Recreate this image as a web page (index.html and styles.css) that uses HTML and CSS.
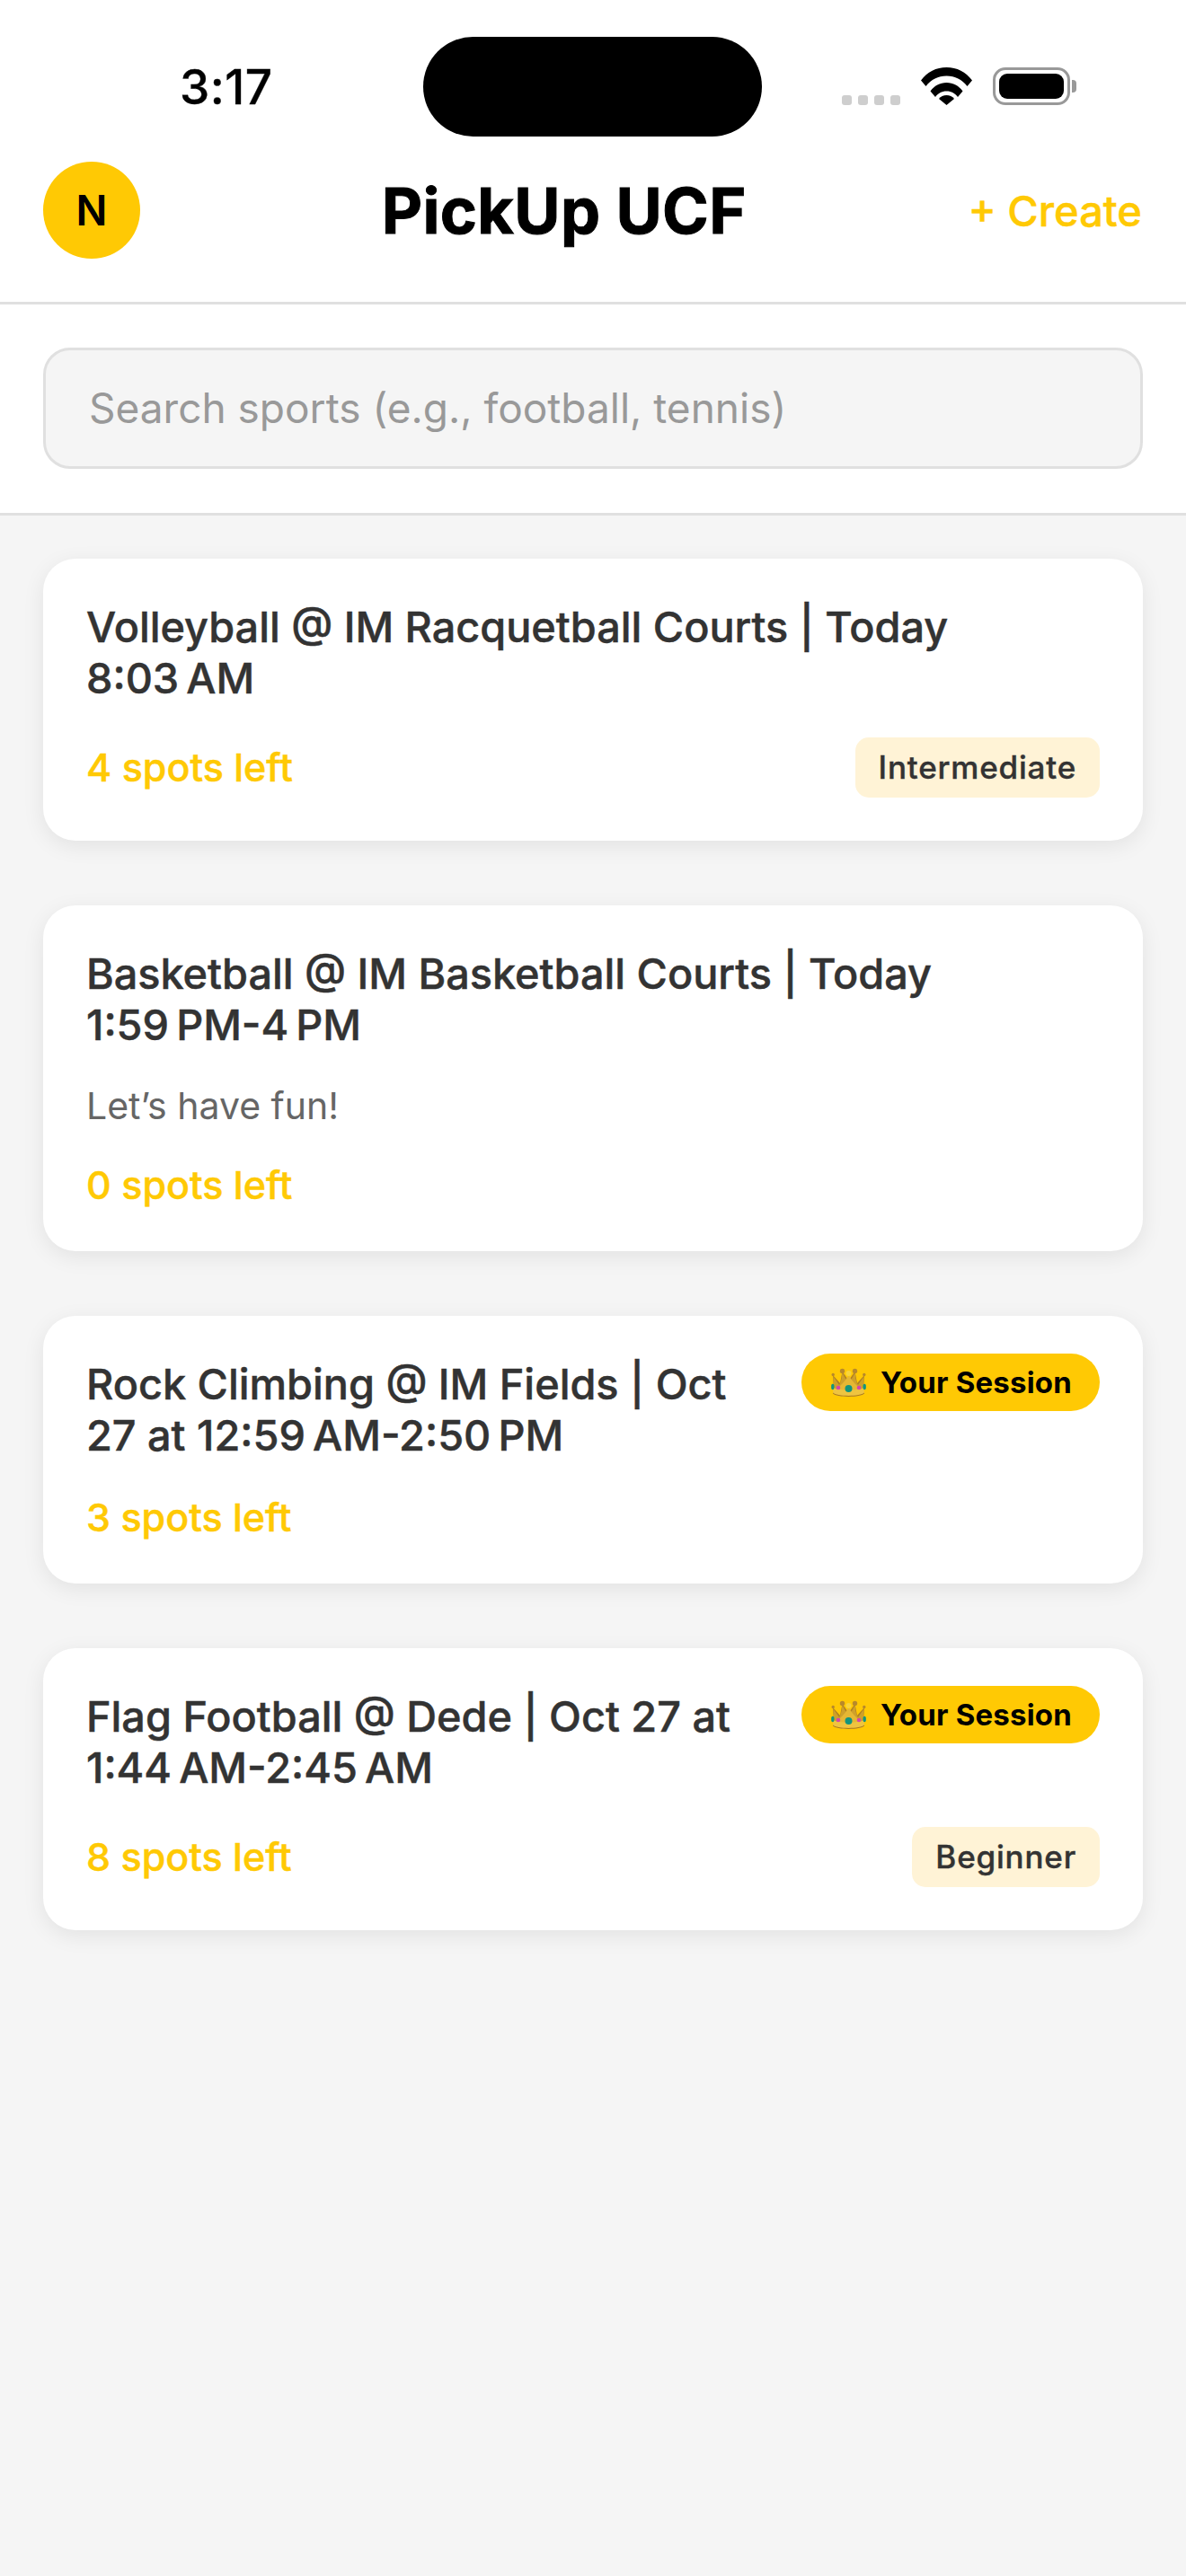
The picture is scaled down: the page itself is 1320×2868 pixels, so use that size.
FILE: index.html
```html
<!DOCTYPE html>
<html lang="en">

<head>
  <meta charset="UTF-8">
  <title>PickUp UCF</title>
  <meta name="viewport" content="width=device-width, initial-scale=1.0">
  <link rel="stylesheet" href="styles.css">
</head>

<body>
  <svg class="defs" width="0" height="0" aria-hidden="true">
    <symbol id="crown" viewBox="0 0 39 32">
      <!-- back of the crown -->
      <path d="M3 24 2 8l8 9L12.500 4l7 10 7-10L29 17l8-9-1 16z" fill="#b08020"/>
      <!-- front lobes -->
      <path d="M3 25 2.500 9.500 9 19c2-2.500 3-8 3.500-14 2 5 4.500 9 7 11 2.500-2 5-6 7-11 .5 6 1.500 11.500 3.500 14l6.500-9.500L36 25z" fill="#dcae30" opacity=".7"/>
      <path d="M19.500 8c-3 5-5.500 8.500-9.500 12l-5 5h29l-5-5c-4-3.500-6.500-7-9.500-12z" fill="#e6b733"/>
      <!-- band -->
      <path d="M2.500 22c5 3.500 29 3.500 34 0l.5 6.500c-4 4.500-31 4.500-35 0z" fill="#efc440"/>
      <path d="M2 27.500c4 4.500 31 4.500 35 0v1c-4 4.500-31 4.500-35 0z" fill="#a9781c"/>
      <circle cx="12.500" cy="3.500" r="2.700" fill="#b8892a"/>
      <circle cx="26.500" cy="3.500" r="2.700" fill="#b8892a"/>
      <circle cx="19.500" cy="6" r="3" fill="#f7d43e"/>
      <circle cx="2.200" cy="7.500" r="1.700" fill="#b8892a"/>
      <circle cx="36.800" cy="7.500" r="1.700" fill="#b8892a"/>
      <circle cx="19.500" cy="23" r="4" fill="#12947e"/>
      <circle cx="8" cy="22" r="2.300" fill="#d545ad"/>
      <circle cx="31" cy="22" r="2.300" fill="#d545ad"/>
      <ellipse cx="1.800" cy="21" rx="1.700" ry="3.200" fill="#12947e"/>
      <ellipse cx="37.200" cy="21" rx="1.700" ry="3.200" fill="#12947e"/>
    </symbol>
  </svg>

  <header class="top">
    <div class="status">
      <span class="time">3:17</span>
      <i class="island"></i>
      <div class="status-icons">
        <div class="signal"><i></i><i></i><i></i><i></i></div>
        <svg class="wifi" width="57" height="42" viewBox="0 0 57 42">
          <path d="M0 14.500C7 5 17 0 28.500 0S50 5 57 14.500l-5.500 6.500C45.500 13.500 38 9.500 28.500 9.500S11.500 13.500 5.500 21z"/>
          <path d="M10.500 26.500C15 20.500 21 17 28.500 17s13.500 3.500 18 9.500l-5.500 6.500C38 29 34 26.500 28.500 26.500S19 29 16 33z"/>
          <path d="M20 35c2-2.500 5-4 8.500-4s6.500 1.500 8.500 4l-8.500 7z"/>
        </svg>
        <div class="battery"><i></i></div>
        <i class="battery-cap"></i>
      </div>
    </div>
    <nav class="nav">
      <div class="avatar">N</div>
      <h1>PickUp UCF</h1>
      <a class="create">+ Create</a>
    </nav>
  </header>

  <section class="search">
    <div class="search-box">Search sports (e.g., football, tennis)</div>
  </section>

  <main class="list">
    <article class="card">
      <div class="card-head">
        <h2>Volleyball @ IM Racquetball Courts | Today 8:03&#8239;AM</h2>
      </div>
      <div class="card-foot">
        <span class="spots">4 spots left</span>
        <span class="level">Intermediate</span>
      </div>
    </article>

    <article class="card">
      <div class="card-head">
        <h2>Basketball @ IM Basketball Courts | Today 1:59&#8239;PM-4&#8239;PM</h2>
      </div>
      <p class="note">Let’s have fun!</p>
      <div class="card-foot">
        <span class="spots">0 spots left</span>
      </div>
    </article>

    <article class="card">
      <div class="card-head">
        <h2>Rock Climbing @ IM Fields | Oct 27 at 12:59&#8239;AM-2:50&#8239;PM</h2>
        <span class="mine"><svg width="39" height="32"><use href="#crown"/></svg>Your Session</span>
      </div>
      <div class="card-foot">
        <span class="spots">3 spots left</span>
      </div>
    </article>

    <article class="card">
      <div class="card-head">
        <h2>Flag Football @ Dede | Oct 27 at 1:44&#8239;AM-2:45&#8239;AM</h2>
        <span class="mine"><svg width="39" height="32"><use href="#crown"/></svg>Your Session</span>
      </div>
      <div class="card-foot">
        <span class="spots">8 spots left</span>
        <span class="level">Beginner</span>
      </div>
    </article>
  </main>
</body>

</html>
```

FILE: styles.css
```css
:root {
  --yellow: #ffc904;
  --line: #e0e0e0;
  --text: #333333;
  --page: #f5f5f5;
}

* {
  box-sizing: border-box;
}

html, body {
  margin: 0;
  height: 100%;
}

body {
  font-family: Inter, "Noto Sans", sans-serif;
  background-color: var(--page);
  color: var(--text);
}

.defs {
  position: absolute;
}

/* status bar + title */
.top {
  background-color: #fff;
  border-bottom: 3px solid var(--line);
}

.status {
  position: relative;
  display: flex;
  align-items: flex-start;
  height: 180px;
  color: #000;
}

.time {
  margin: 66px 0 0 200px;
  font-size: 53px;
  line-height: 62px;
  font-weight: 500;
  letter-spacing: .5px;
  -webkit-text-stroke: .4px #000;
}

.island {
  position: absolute;
  left: 471px;
  top: 41px;
  width: 377px;
  height: 111px;
  border-radius: 56px;
  background-color: #000;
}

.status-icons {
  display: flex;
  align-items: flex-start;
  margin: 75px 0 0 auto;
  padding-right: 122px;
}

.signal {
  display: flex;
  gap: 7px;
  margin: 31px 23px 0 0;
}
.signal i {
  width: 11px;
  height: 11px;
  border-radius: 3px;
  background-color: #cecece;
}

.wifi {
  display: block;
  margin-right: 23px;
}

.battery {
  width: 86px;
  height: 42px;
  padding: 4px;
  border: 3px solid #999;
  border-radius: 14px;
}
.battery i {
  display: block;
  height: 100%;
  border-radius: 9px;
  background-color: #000;
}
.battery-cap {
  width: 5px;
  height: 14px;
  margin: 14px 0 0 2px;
  border-radius: 0 4px 4px 0;
  background-color: #999;
}

.nav {
  display: flex;
  align-items: center;
  justify-content: space-between;
  height: 156px;
  padding: 0 48px 48px;
}

.avatar {
  display: flex;
  align-items: center;
  justify-content: center;
  width: 108px;
  height: 108px;
  border-radius: 50%;
  background-color: var(--yellow);
  color: #000;
  font-size: 46px;
  font-weight: 600;
}

.nav h1 {
  margin: 0 0 0 22px;
  color: #000;
  font-size: 70px;
  font-weight: 700;
  letter-spacing: .4px;
  -webkit-text-stroke: 1px #000;
}

.create {
  margin-right: 1px;
  color: var(--yellow);
  font-size: 47px;
  font-weight: 500;
  -webkit-text-stroke: .5px var(--yellow);
}

/* search */
.search {
  padding: 48px 48px 49px;
  background-color: #fff;
  border-bottom: 3px solid var(--line);
}

.search-box {
  height: 135px;
  padding: 0 48px;
  line-height: 129px;
  background-color: var(--page);
  border: 3px solid var(--line);
  border-radius: 30px;
  color: #999;
  font-size: 46px;
}

/* sessions */
.list {
  display: flex;
  flex-direction: column;
  gap: 72px;
  padding: 48px;
}

.card {
  padding: 48px;
  background-color: #fff;
  border-radius: 36px;
  box-shadow: 0 6px 24px rgba(0, 0, 0, .08);
}

.card-head {
  display: flex;
  align-items: flex-start;
  justify-content: space-between;
  gap: 48px;
}

.card h2 {
  flex: 1;
  margin: 0;
  font-size: 46.8px;
  line-height: 57px;
  font-weight: 500;
  -webkit-text-stroke: .5px var(--text);
}

.mine {
  display: flex;
  flex: none;
  align-items: center;
  gap: 16px;
  height: 64px;
  margin-top: -6px;
  padding: 0 31px 0 33px;
  border-radius: 32px;
  background-color: var(--yellow);
  color: #000;
  font-size: 33px;
  font-weight: 700;
  letter-spacing: .2px;
}

.note {
  margin: 36px 0 0;
  color: #666;
  font-size: 41px;
  line-height: 51px;
}

.card-foot {
  display: flex;
  align-items: center;
  justify-content: space-between;
  margin-top: 37px;
}

.spots {
  color: var(--yellow);
  font-size: 43px;
  line-height: 51px;
  font-weight: 500;
  -webkit-text-stroke: .5px var(--yellow);
}

.level {
  height: 67px;
  padding: 0 26px;
  line-height: 67px;
  border-radius: 15px;
  background-color: #fff3d6;
  font-size: 35px;
  font-weight: 500;
  letter-spacing: .8px;
  -webkit-text-stroke: .4px var(--text);
}
```
